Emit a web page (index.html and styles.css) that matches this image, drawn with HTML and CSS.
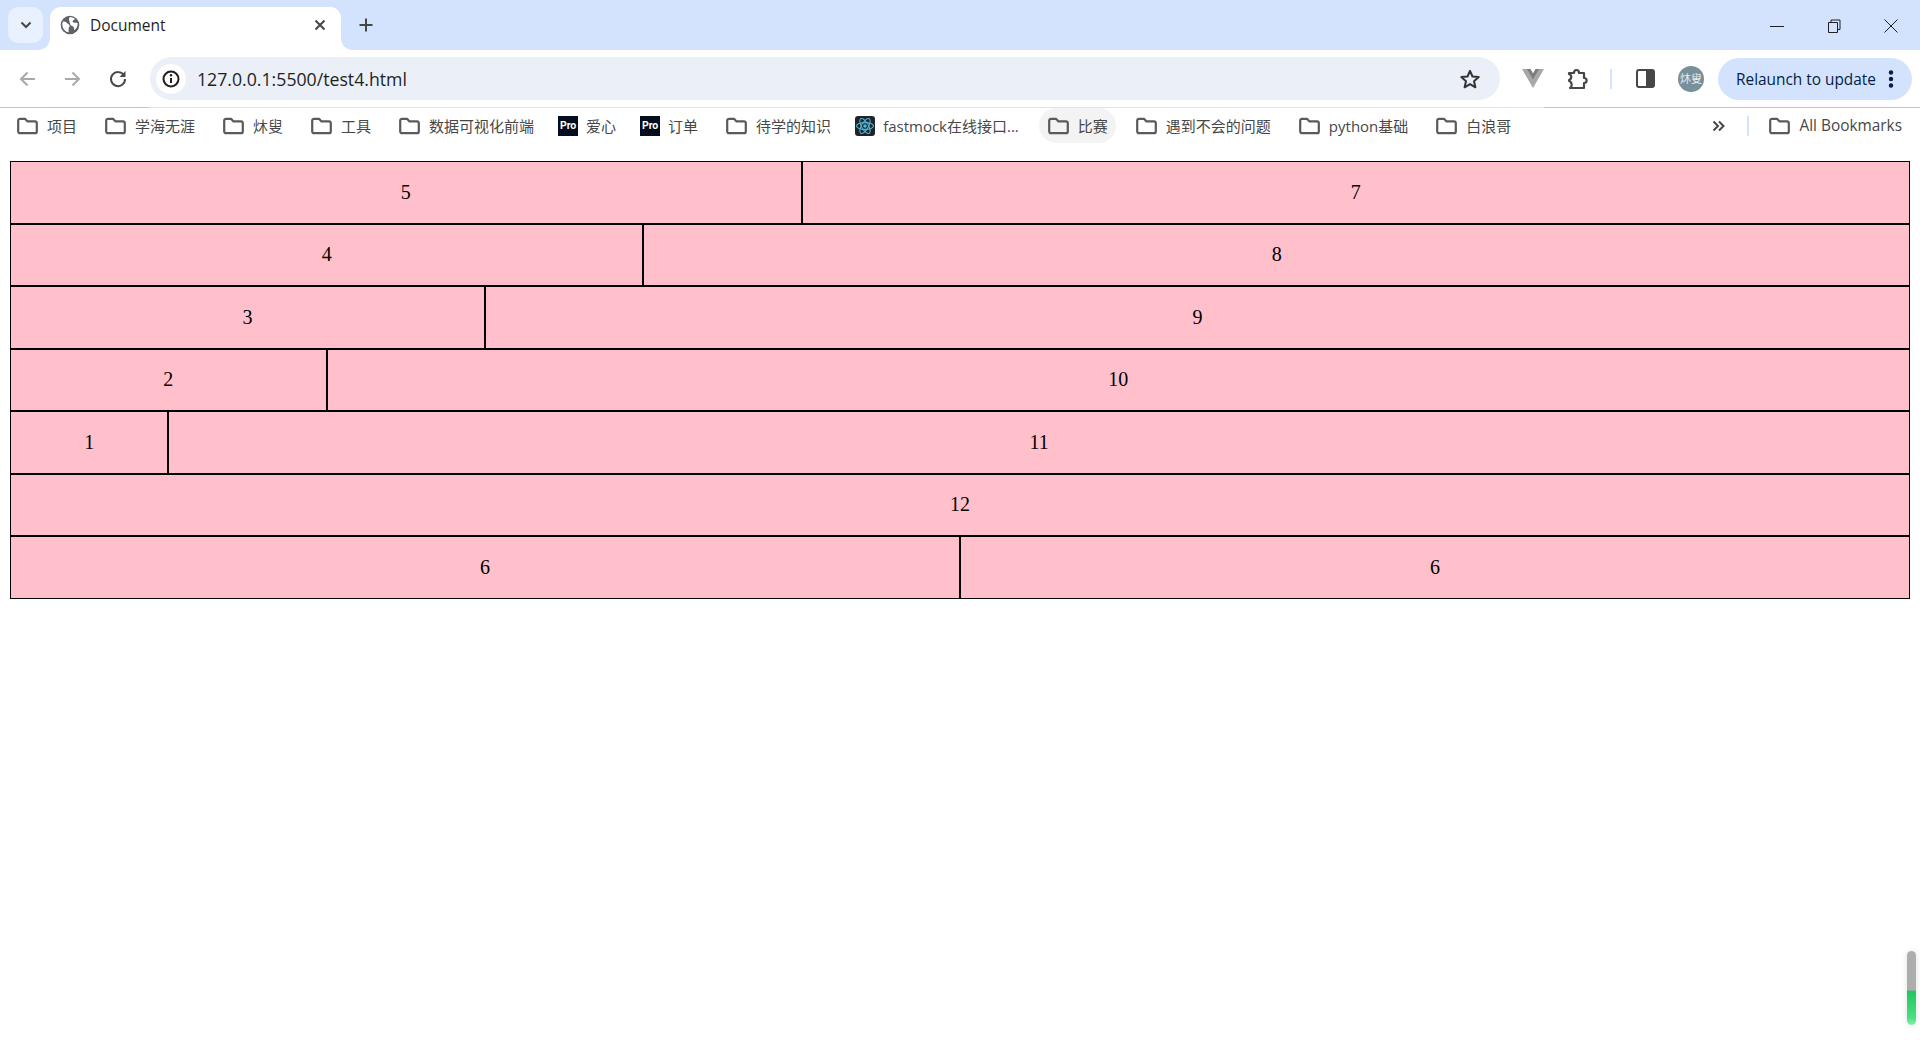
FILE: index.html
```html
<!DOCTYPE html>
<html lang="zh">
<head>
<meta charset="utf-8">
<title>Document</title>
<link rel="stylesheet" href="styles.css">
</head>
<body>
<header class="chrome">
  <div class="tabstrip">
    <button class="tab-search"><svg width="14" height="14" viewBox="0 0 14 14"><path d="M2.5 4.5 7 9l4.5-4.5" class="ink-2"/></svg></button>
    <div class="tab">
      <svg class="favicon" width="20" height="20" viewBox="0 0 20 20"><circle cx="10" cy="10" r="9.3" fill="#5f6368"/><path d="M3 6.5c2-.3 3.5.6 4.2 1.8.6 1 2.1.9 2.4 2.2.3 1.2-.8 1.800-1 3-.1 1.200-.2 2.400.2 3.700C5 17 2 13 2.300 8.500ZM11 2c1.500 1.200 2.800.6 3.500 1.200.6.5-.2 1.700-1.200 2-1 .4-.9 1.700.2 2.200 1 .5 2.900-.1 4.100.6.400 3-1 5.500-3.300 7.200-.4-1.500-.1-3-1.200-3.700-1.100-.8-2.800-.9-3-2.500C9.800 7 8.800 5 9 3.500 9.200 2.700 10 2 11 2Z" fill="#fff"/></svg>
      <span class="tab-title">Document</span>
      <svg class="tab-close" width="12" height="12" viewBox="0 0 12 12"><path d="M1.500 1.500l9 9m0-9-9 9" class="ink-2"/></svg>
    </div>
    <svg class="new-tab" width="16" height="16" viewBox="0 0 16 16"><path d="M8 1.500v13M1.500 8h13" class="ink-2"/></svg>
    <div class="window-controls">
      <svg width="16" height="16" viewBox="0 0 16 16"><path d="M1 8.500h14" class="ink-1"/></svg>
      <svg width="16" height="16" viewBox="0 0 16 16"><path d="M2.500 4.500h9v10h-9zM5 4.500V2h9v9.500h-2.500" class="ink-1"/></svg>
      <svg width="16" height="16" viewBox="0 0 16 16"><path d="M1.500 1.500l13 13m0-13-13 13" class="ink-1"/></svg>
    </div>
  </div>
  <div class="toolbar">
    <svg class="nav-back" width="20" height="20" viewBox="0 0 20 20"><path d="M17 10H3.500M9.500 3.500 3 10l6.500 6.500" class="ink-muted"/></svg>
    <svg class="nav-forward" width="20" height="20" viewBox="0 0 20 20"><path d="M3 10h13.500M10.500 3.500 17 10l-6.500 6.500" class="ink-muted"/></svg>
    <svg class="nav-reload" width="20" height="20" viewBox="0 0 20 20"><path d="M16 6.500A7 7 0 1 0 17 10" class="ink-2"/><path d="M17.500 2v6h-6z" fill="#474747"/></svg>
    <div class="omnibox">
      <span class="info-chip"><svg width="18" height="18" viewBox="0 0 18 18"><circle cx="9" cy="9" r="7.500" fill="none" stroke="#1f1f1f" stroke-width="2"/><path d="M9 8v5" stroke="#1f1f1f" stroke-width="2"/><circle cx="9" cy="5.300" r="1.200" fill="#1f1f1f"/></svg></span>
      <span class="url">127.0.0.1:5500/test4.html</span>
      <svg class="star" width="22" height="22" viewBox="0 0 22 22"><path d="M11 2.800l2.500 5.700 6.200.6-4.700 4.100 1.400 6.100L11 16.100l-5.400 3.200L7 13.200 2.300 9.100l6.200-.6z" fill="none" stroke="#333" stroke-width="2" stroke-linejoin="round"/></svg>
    </div>
    <svg class="ext-vue" width="22" height="19" viewBox="0 0 22 19"><path d="M0 0h8l3 5 3-5h8L11 19z" fill="#a8a8a8"/><path d="M5 0h3.500L11 4.500 13.500 0H17l-6 10.500z" fill="#7d7d7d"/></svg>
    <svg class="ext-puzzle" width="22" height="22" viewBox="0 0 22 22"><path d="M2 5h5c0-4 5-4 5 0h5v5c3.500 0 3.500 5 0 5v5H3c2-1 2.500-5 0-6.500-1 0-1-.5-1-1.500 3-1 3-5 0-6z" fill="none" stroke="#474747" stroke-width="2.200" stroke-linejoin="round"/></svg>
    <span class="vdivider"></span>
    <svg class="side-panel" width="19" height="19" viewBox="0 0 19 19"><rect x="1" y="1" width="17" height="17" rx="2" fill="#fff" stroke="#474747" stroke-width="2"/><rect x="10" y="1" width="8" height="17" fill="#474747"/></svg>
    <span class="avatar">炑叟</span>
    <div class="relaunch">
      <span class="relaunch-label">Relaunch to update</span>
      <svg width="6" height="18" viewBox="0 0 6 18"><circle cx="3" cy="2.500" r="2.200"/><circle cx="3" cy="9" r="2.200"/><circle cx="3" cy="15.500" r="2.200"/></svg>
    </div>
  </div>
  <div class="toolbar-rule"><span class="rule-dark rule-left"></span><span class="rule-light"></span><span class="rule-dark rule-right"></span></div>
  <nav class="bookmarks">
    <a class="bm"><svg class="folder" viewBox="0 0 21 18"><use href="#folder"/></svg>项目</a>
    <a class="bm"><svg class="folder" viewBox="0 0 21 18"><use href="#folder"/></svg>学海无涯</a>
    <a class="bm"><svg class="folder" viewBox="0 0 21 18"><use href="#folder"/></svg>炑叟</a>
    <a class="bm"><svg class="folder" viewBox="0 0 21 18"><use href="#folder"/></svg>工具</a>
    <a class="bm"><svg class="folder" viewBox="0 0 21 18"><use href="#folder"/></svg>数据可视化前端</a>
    <a class="bm bm-site"><span class="pro">Pro</span>爱心</a>
    <a class="bm bm-site"><span class="pro">Pro</span>订单</a>
    <a class="bm"><svg class="folder" viewBox="0 0 21 18"><use href="#folder"/></svg>待学的知识</a>
    <a class="bm bm-site"><svg class="atom" width="20" height="20" viewBox="0 0 20 20"><rect width="20" height="20" rx="3" fill="#20242a"/><g fill="none" stroke="#4fb6d6" stroke-width="1.100"><ellipse cx="10" cy="10" rx="8.500" ry="3.400"/><ellipse cx="10" cy="10" rx="8.500" ry="3.400" transform="rotate(60 10 10)"/><ellipse cx="10" cy="10" rx="8.500" ry="3.400" transform="rotate(120 10 10)"/></g><circle cx="10" cy="10" r="1.800" fill="#4fb6d6"/></svg>fastmock在线接口...</a>
    <a class="bm bm-hover"><svg class="folder" viewBox="0 0 21 18"><use href="#folder"/></svg>比赛</a>
    <a class="bm"><svg class="folder" viewBox="0 0 21 18"><use href="#folder"/></svg>遇到不会的问题</a>
    <a class="bm"><svg class="folder" viewBox="0 0 21 18"><use href="#folder"/></svg>python基础</a>
    <a class="bm"><svg class="folder" viewBox="0 0 21 18"><use href="#folder"/></svg>白浪哥</a>
    <svg class="chevrons" width="13" height="12" viewBox="0 0 13 12"><path d="M1.500 1.500 6 6l-4.500 4.500M7 1.500 11.500 6 7 10.500" class="ink-2"/></svg>
    <span class="vdivider bm-divider"></span>
    <a class="bm bm-all"><svg class="folder" viewBox="0 0 21 18"><use href="#folder"/></svg>All Bookmarks</a>
  </nav>
  <svg class="defs" width="0" height="0"><defs><path id="folder" d="M3 1.800h5l2.500 2.600H18a1.800 1.800 0 0 1 1.800 1.800v8.200a1.800 1.800 0 0 1-1.800 1.800H3a1.800 1.800 0 0 1-1.800-1.800V3.600A1.800 1.800 0 0 1 3 1.800Z" fill="none" stroke="#5a5a5a" stroke-width="2.200" stroke-linejoin="round"/></defs></svg>
</header>
<main class="page">
  <div class="grid">
    <div class="cell span-5">5</div><div class="cell span-7">7</div>
    <div class="cell span-4">4</div><div class="cell span-8">8</div>
    <div class="cell span-3">3</div><div class="cell span-9">9</div>
    <div class="cell span-2">2</div><div class="cell span-10">10</div>
    <div class="cell span-1">1</div><div class="cell span-11">11</div>
    <div class="cell span-12">12</div>
    <div class="cell span-6">6</div><div class="cell span-6">6</div>
  </div>
</main>
<div class="scroll-indicator"></div>
</body>
</html>
```
FILE: styles.css
```css
* { box-sizing: border-box; }
html, body { height: 100%; }
body { margin: 0; overflow: hidden; background: #fff; font-family: "Liberation Serif", "Noto Sans CJK SC", serif; }
svg { display: block; flex: none; }
.ink-1 { fill: none; stroke: #1f1f1f; stroke-width: 1; }
.ink-2 { fill: none; stroke: #474747; stroke-width: 2; }
.ink-muted { fill: none; stroke: #a9a9a9; stroke-width: 2; }

.chrome { height: 151px; font-family: "Open Sans", "Noto Sans CJK SC", sans-serif; }

.tabstrip { height: 50px; background: #d3e3fd; display: flex; align-items: flex-start; padding: 7px 0 0 8px; }
.tab-search { width: 35px; height: 36px; padding: 0; border: 0; border-radius: 10px; background: #e9f0fe; display: flex; align-items: center; justify-content: center; margin-right: 7px; }
.tab { position: relative; width: 291px; height: 43px; background: #fff; border-radius: 11px 11px 0 0; display: flex; align-items: center; padding: 0 15px 7px 10px; z-index: 1; }
.tab::before, .tab::after { content: ""; position: absolute; bottom: 0; width: 11px; height: 11px; }
.tab::before { left: -11px; background: radial-gradient(circle at 0 0, #d3e3fd 10.500px, #fff 11px); }
.tab::after { right: -11px; background: radial-gradient(circle at 100% 0, #d3e3fd 10.500px, #fff 11px); }
.favicon { margin-right: 10px; }
.tab-title { flex: 1; font-size: 15.500px; color: #1f1f1f; }
.new-tab { margin: 10px 0 0 17px; }
.window-controls { margin-left: auto; display: flex; gap: 41px; padding: 11px 21px 0 0; }

.toolbar { height: 57px; background: #fff; border-radius: 12px 12px 0 0; display: flex; align-items: center; padding-left: 17px; position: relative; }
.nav-back { margin-left: 1px; }
.nav-forward { margin-left: 24px; }
.nav-reload { margin-left: 26px; }
.omnibox { width: 1350px; height: 43px; margin-left: 22px; border-radius: 22px; background: #ebeff7; display: flex; align-items: center; padding: 0 19px 0 6px; }
.info-chip { width: 30px; height: 30px; border-radius: 50%; background: #fff; display: flex; align-items: center; justify-content: center; margin-right: 11px; }
.url { flex: 1; font-size: 17.700px; color: #1f1f1f; }
.ext-vue { margin-left: 22px; }
.ext-puzzle { margin-left: 23px; }
.vdivider { width: 2px; height: 20px; background: #d3e3fd; flex: none; }
.toolbar > .vdivider { margin-left: 21px; }
.side-panel { margin-left: 24px; }
.avatar { width: 26px; height: 26px; margin-left: 23px; border-radius: 50%; background: #78909c; color: #e6ecef; font-size: 11px; line-height: 26px; text-align: center; white-space: nowrap; flex: none; }
.relaunch { margin-left: 14px; width: 194px; height: 42px; border-radius: 21px; background: #d3e3fd; color: #041e49; display: flex; align-items: center; padding: 0 18px; }
.relaunch-label { flex: 1; font-size: 15.400px; padding-top: 2px; }
.relaunch svg { fill: #041e49; }

.toolbar-rule { height: 1px; display: flex; }
.rule-dark { background: #c4c4c4; }
.rule-left { width: 149px; }
.rule-right { width: 376px; }
.rule-light { flex: 1; background: #e3e3e3; }

.bookmarks { height: 35px; display: flex; align-items: center; gap: 12px; padding-left: 9px; font-size: 15px; color: #474747; }
.bm { height: 35px; padding: 0 8px; display: flex; align-items: center; gap: 9px; border-radius: 18px; white-space: nowrap; }
.bm-site { gap: 8px; padding-left: 4px; }
.bm-hover { background: #f3f3f3; padding-left: 9px; }
.folder { width: 21px; height: 18px; }
.pro { width: 20px; height: 20px; background: #020d1e; color: #fff; font: 700 10.500px/20px "Roboto", sans-serif; text-align: center; flex: none; }
.chevrons { margin-left: auto; }
.bm-divider { margin-left: 10px; }
.bm-all { margin-right: 10px; font-size: 15.400px; }

.page { padding: 10px; }
.grid { display: grid; grid-template-columns: repeat(12, 1fr); grid-auto-rows: 62.500px; }
.cell { background: #ffc0cb; border: 1px solid #000; display: flex; align-items: center; justify-content: center; font-size: 20px; color: #000; }
.span-1 { grid-column: span 1; }
.span-2 { grid-column: span 2; }
.span-3 { grid-column: span 3; }
.span-4 { grid-column: span 4; }
.span-5 { grid-column: span 5; }
.span-6 { grid-column: span 6; }
.span-7 { grid-column: span 7; }
.span-8 { grid-column: span 8; }
.span-9 { grid-column: span 9; }
.span-10 { grid-column: span 10; }
.span-11 { grid-column: span 11; }
.span-12 { grid-column: span 12; }

.scroll-indicator { position: fixed; left: 1907px; top: 951px; width: 9px; height: 74px; border-radius: 5px; background: linear-gradient(#adadad 0, #adadad 53%, #22c55e 54%, #4ade80 90%, #86efac 100%); box-shadow: 0 0 6px rgba(0,0,0,.12); }
```
